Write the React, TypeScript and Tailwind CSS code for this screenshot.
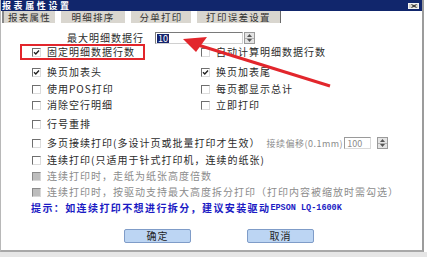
import React from 'react'

type Tone = 'normal' | 'disabled'

function Check({ checked = false, tone = 'normal' }: { checked?: boolean; tone?: Tone }) {
  if (tone === 'disabled') {
    return (
      <span className="inline-block w-[9px] h-[9px] shrink-0 border border-t-[#8a8a8a] border-l-[#8a8a8a] border-b-[#d8d8d8] border-r-[#d8d8d8] bg-[#bdbdbd]" />
    )
  }
  return (
    <span className="relative inline-block w-[9px] h-[9px] shrink-0 border border-t-[#6f6f6f] border-l-[#6f6f6f] border-b-[#dcdcdc] border-r-[#dcdcdc] bg-white">
      {checked && (
        <svg width="7" height="7" viewBox="0 0 7 7" className="absolute left-0 top-0">
          <path d="M1 3.2 L2.8 5 L6 1.5" fill="none" stroke="#222" strokeWidth="1.4" />
        </svg>
      )}
    </span>
  )
}

function Spinner({ className = '' }: { className?: string }) {
  return (
    <span className={`flex flex-col w-[11px] h-[12px] border border-[#9a9a9a] bg-[#e4e4e4] ${className}`}>
      <span className="flex-1 flex items-center justify-center border-b border-[#b0b0b0]">
        <svg width="5" height="3" viewBox="0 0 5 3"><path d="M0 3 L2.5 0 L5 3Z" fill="#555" /></svg>
      </span>
      <span className="flex-1 flex items-center justify-center">
        <svg width="5" height="3" viewBox="0 0 5 3"><path d="M0 0 L2.5 3 L5 0Z" fill="#555" /></svg>
      </span>
    </span>
  )
}

function Item({
  label,
  checked,
  tone = 'normal',
}: {
  label: string
  checked?: boolean
  tone?: Tone
}) {
  return (
    <div className="flex items-center gap-[6px] whitespace-nowrap">
      <Check checked={checked} tone={tone} />
      <span className={tone === 'disabled' ? 'text-[#8c8c8c]' : 'text-[#2b2b2b]'}>{label}</span>
    </div>
  )
}

function Row({ className = '', children }: { className?: string; children: React.ReactNode }) {
  return <div className={`h-[16px] flex items-center pl-[31px] ${className}`}>{children}</div>
}

function Pair({ left, right }: { left: React.ReactNode; right?: React.ReactNode }) {
  return (
    <div className="grid grid-cols-[169px_1fr] items-center w-full">
      <div>{left}</div>
      <div>{right}</div>
    </div>
  )
}

const tabs = [
  { label: '报表属性', w: 'w-[53px]', active: true },
  { label: '明细排序', w: 'w-[64px]' },
  { label: '分单打印', w: 'w-[60px]' },
  { label: '打印误差设置', w: 'w-[84px]' },
]

export default function App() {
  return (
    <div className="relative w-[427px] h-[257px] bg-white overflow-hidden flex flex-col text-[10px] tracking-[1px] leading-none font-['Noto_Sans_CJK_SC',sans-serif]">
      <div className="w-[424px] h-[252px] flex flex-col border-l border-l-[#b8b8b8] border-r-2 border-r-[#9c9c9c] border-b-2 border-b-[#a8a8a8]">
        {/* title bar */}
        <div className="h-[11px] bg-[#11266c] flex items-center justify-between pl-[1px] pr-[3px]">
          <span className="text-white font-bold text-[9px] leading-[10px] tracking-[2.6px]">报表属性设置</span>
          <span className="w-[11px] h-[6px] bg-[#d6d3cc] border border-[#f4f4f4] flex items-center justify-center">
            <svg width="6" height="4" viewBox="0 0 6 4">
              <path d="M0.5 0.5 L5.5 3.5 M5.5 0.5 L0.5 3.5" stroke="#222" strokeWidth="1" />
            </svg>
          </span>
        </div>

        {/* tabs */}
        <div className="h-[12px] flex items-stretch pl-[1px] gap-[6px]">
          {tabs.map((t) => (
            <div
              key={t.label}
              className={`${t.w} flex items-center justify-center bg-[#d9d6cf] text-[#333] text-[9.5px] leading-[10px] tracking-[1.3px] ${
                t.active ? 'border-l-2 border-l-[#8a8a8a]' : ''
              } ${t.label === '打印误差设置' ? 'border-r border-r-[#6a6a6a]' : ''}`}
            >
              {t.label}
            </div>
          ))}
        </div>

        {/* content */}
        <div className="flex-1 flex flex-col">
          <div className="mt-[9px] h-[12px] flex items-center">
            <span className="w-[144px] text-right pr-[1px] text-[#2b2b2b]">最大明细数据行</span>
            <div className="ml-[10px] w-[88px] h-[12px] border border-t-[#7a7a7a] border-l-[#7a7a7a] border-b-[#d0d0d0] border-r-[#d0d0d0] bg-white flex items-center pl-[1px]">
              <span className="bg-[#14246e] text-white text-[9px] leading-[9px] px-[1px] tracking-normal">10</span>
            </div>
            <Spinner className="ml-[1px]" />
          </div>

          <div className="h-[16px] flex items-center">
            <div className="ml-[19px] w-[125px] h-[16px] border-2 border-[#e2262c] flex items-center pl-[10px]">
              <Item label="固定明细数据行数" checked />
            </div>
            <div className="ml-[56px]">
              <Item label="自动计算明细数据行数" />
            </div>
          </div>

          <Row className="mt-[4px]">
            <Pair left={<Item label="换页加表头" checked />} right={<Item label="换页加表尾" checked />} />
          </Row>
          <Row className="mt-[1px]">
            <Pair left={<Item label="使用POS打印" />} right={<Item label="每页都显示总计" />} />
          </Row>
          <Row>
            <Pair left={<Item label="消除空行明细" />} right={<Item label="立即打印" />} />
          </Row>
          <Row className="mt-[3px]">
            <Item label="行号重排" />
          </Row>
          <Row className="mt-[3px]">
            <Item label="多页接续打印(多设计页或批量打印才生效）" />
            <span className="ml-[6px] text-[#8c8c8c] whitespace-nowrap text-[9px] tracking-[0.5px]">接续偏移(0.1mm)</span>
            <div className="ml-[1px] w-[27px] h-[12px] border border-t-[#9a9a9a] border-l-[#9a9a9a] border-b-[#dadada] border-r-[#dadada] bg-white flex items-center pl-[2px] text-[9px] tracking-normal text-[#8c8c8c]">
              100
            </div>
            <Spinner className="ml-[6px]" />
          </Row>
          <Row className="mt-[1px]">
            <Item label="连续打印(只适用于针式打印机，连续的纸张)" />
          </Row>
          <Row>
            <Item label="连续打印时，走纸为纸张高度倍数" tone="disabled" />
          </Row>
          <Row>
            <Item label="连续打印时，按驱动支持最大高度拆分打印（打印内容被缩放时需勾选）" tone="disabled" />
          </Row>
          <div className="h-[16px] flex items-center pl-[30px] whitespace-nowrap text-[#1b1bc4] font-bold tracking-[1.4px]">
            提示：如连续打印不想进行拆分，建议安装驱动
            <span className="font-['Liberation_Mono',monospace] text-[8.5px] tracking-[0px]">EPSON LQ-1600K</span>
          </div>

          <div className="mt-[13px] flex pl-[123px] gap-[56px]">
            {['确定', '取消'].map((b) => (
              <button
                key={b}
                type="button"
                className="w-[67px] h-[14px] rounded-[2px] border border-[#7f9cc8] bg-[#bcd5f3] text-[#1e1e1e] text-[10px] leading-none tracking-[1px]"
              >
                {b}
              </button>
            ))}
          </div>
        </div>
      </div>
      <div className="flex-1 bg-[#e6e6e6]" />

      {/* red arrow overlay */}
      <svg className="absolute left-0 top-0 pointer-events-none" width="427" height="257" viewBox="0 0 427 257">
        <line x1="198" y1="45" x2="330" y2="86" stroke="#e2262c" strokeWidth="3" />
        <path d="M183 39 L207 37 L196 52 Z" fill="#e2262c" />
      </svg>
    </div>
  )
}
